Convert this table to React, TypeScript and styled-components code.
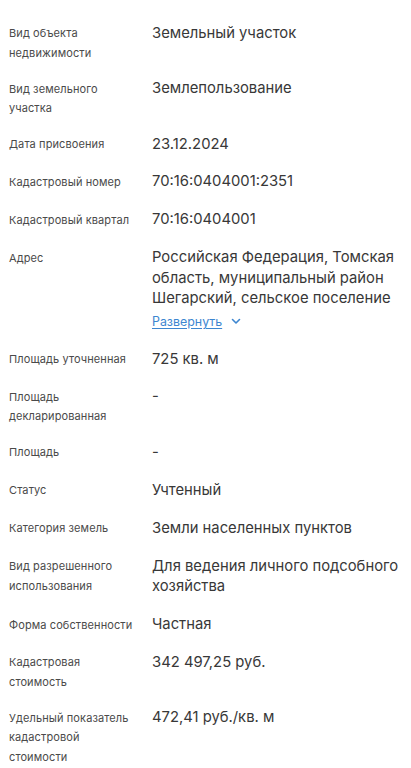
import React from "react";
import styled, { createGlobalStyle } from "styled-components";

const Global = createGlobalStyle`
  html, body { margin: 0; padding: 0; background: #ffffff; }
  body { font-family: Inter, "Noto Sans", Roboto, sans-serif; -webkit-font-smoothing: antialiased; }
`;

const List = styled.dl`
  margin: 0;
  padding: 24px 8px 0 9px;
  display: flex;
  flex-direction: column;
  gap: 16.5px;
`;

const Row = styled.div`
  display: grid;
  grid-template-columns: 131px 1fr;
  column-gap: 12px;
  align-items: start;
`;

const Label = styled.dt`
  margin: 0;
  font-size: 11px;
  line-height: 19.5px;
  color: #4a4a4a;
  letter-spacing: 0.1px;
`;

const Value = styled.dd`
  margin: -1.5px 0 0 0;
  padding-bottom: 2.4px;
  font-size: 14.8px;
  line-height: 20.5px;
  color: #383838;
`;

const Expand = styled.button`
  display: inline-flex;
  align-items: center;
  gap: 9px;
  margin-top: 3px;
  padding: 0;
  border: 0;
  background: none;
  font-family: inherit;
  font-size: 12.4px;
  line-height: 19px;
  color: #3d86d0;
  cursor: pointer;
`;

const ExpandText = styled.span`
  text-decoration: underline;
  text-underline-offset: 2px;
`;

type Item = { label: string; value: string; expand?: boolean };

const items: Item[] = [
  { label: "Вид объекта недвижимости", value: "Земельный участок" },
  { label: "Вид земельного участка", value: "Землепользование" },
  { label: "Дата присвоения", value: "23.12.2024" },
  { label: "Кадастровый номер", value: "70:16:0404001:2351" },
  { label: "Кадастровый квартал", value: "70:16:0404001" },
  {
    label: "Адрес",
    value: "Российская Федерация, Томская область, муниципальный район Шегарский, сельское поселение",
    expand: true,
  },
  { label: "Площадь уточненная", value: "725 кв. м" },
  { label: "Площадь декларированная", value: "-" },
  { label: "Площадь", value: "-" },
  { label: "Статус", value: "Учтенный" },
  { label: "Категория земель", value: "Земли населенных пунктов" },
  { label: "Вид разрешенного использования", value: "Для ведения личного подсобного хозяйства" },
  { label: "Форма собственности", value: "Частная" },
  { label: "Кадастровая стоимость", value: "342 497,25 руб." },
  { label: "Удельный показатель кадастровой стоимости", value: "472,41 руб./кв. м" },
];

const Chevron = () => (
  <svg width="10" height="7" viewBox="0 0 10 7" fill="none">
    <path d="M1.5 1.5 L5 5 L8.5 1.5" stroke="#3d86d0" strokeWidth="1.6" strokeLinecap="round" strokeLinejoin="round" />
  </svg>
);

export default function App() {
  return (
    <>
      <Global />
      <List>
        {items.map((it) => (
          <Row key={it.label}>
            <Label>{it.label}</Label>
            <Value>
              {it.value}
              {it.expand && (
                <div>
                  <Expand type="button">
                    <ExpandText>Развернуть</ExpandText>
                    <Chevron />
                  </Expand>
                </div>
              )}
            </Value>
          </Row>
        ))}
      </List>
    </>
  );
}
